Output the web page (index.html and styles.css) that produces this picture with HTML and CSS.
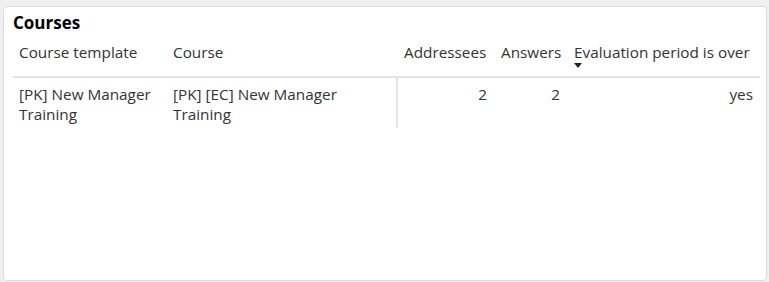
FILE: index.html
```html
<!DOCTYPE html>
<html lang="en">
<head>
    <meta charset="UTF-8">
    <title>Courses</title>
    <link rel="stylesheet" href="styles.css">
</head>
<body>
    <section class="panel">
        <h2 class="panel-title">Courses</h2>
        <table class="grid">
            <colgroup>
                <col class="col-template">
                <col class="col-course">
                <col class="col-addr">
                <col class="col-answers">
                <col class="col-over">
            </colgroup>
            <thead>
                <tr>
                    <th class="text">Course template</th>
                    <th class="text">Course</th>
                    <th>Addressees</th>
                    <th>Answers</th>
                    <th class="sorted">Evaluation period is over<span class="sort-arrow"></span></th>
                </tr>
            </thead>
            <tbody>
                <tr>
                    <td>[PK] New Manager Training</td>
                    <td>[PK] [EC] New Manager Training</td>
                    <td class="num split">2</td>
                    <td class="num">2</td>
                    <td class="num">yes</td>
                </tr>
            </tbody>
        </table>
    </section>
</body>
</html>
```

FILE: styles.css
```css
/* Courses panel */
body {
    margin: 0;
    padding: 6px 2px 1px 3px;
    background-color: #f0f0f0;
    font-family: "Open Sans", "Noto Sans", sans-serif;
    font-size: 15.3px;
    color: #333;
}
.panel {
    box-sizing: border-box;
    height: 275px;
    background-color: #fff;
    border: 1px solid #dcdcdc;
    border-radius: 4px;
    padding: 5px 6px 0 9px;
}
.panel-title {
    margin: 0;
    font-size: 17px;
    font-weight: bold;
    color: #000;
    line-height: 22px;
}
.grid {
    border-collapse: collapse;
    table-layout: fixed;
    width: 747px;
}
.col-template { width: 154px; }
.col-course { width: 230px; }
.col-addr { width: 97px; }
.col-answers { width: 73px; }
.col-over { width: 193px; }
.grid th {
    font-weight: normal;
    text-align: left;
    vertical-align: top;
    padding: 8px 2px 14px 7px;
    line-height: 20px;
    border-bottom: 2px solid #e3e3e3;
    white-space: nowrap;
}
.grid th.text {
    padding-left: 6px;
}
.grid td {
    vertical-align: top;
    padding: 6px 6px 4px 6px;
    line-height: 20px;
}
.grid .num {
    text-align: right;
    padding-right: 7px;
}
.grid .split {
    border-left: 2px solid #e3e3e3;
}
.sorted {
    position: relative;
}
.sort-arrow {
    position: absolute;
    left: 7px;
    top: 29px;
    width: 0;
    height: 0;
    border-left: 4px solid transparent;
    border-right: 4px solid transparent;
    border-top: 5px solid #222;
}
```
